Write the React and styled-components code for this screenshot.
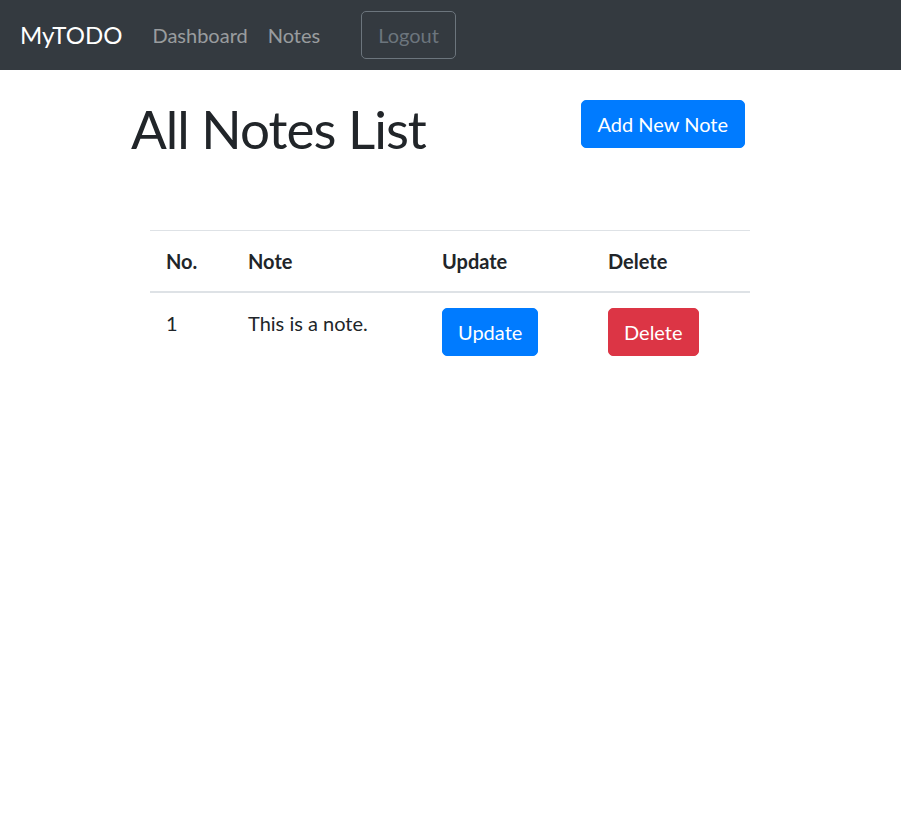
import React from "react";
import styled, { createGlobalStyle, css } from "styled-components";

const Global = createGlobalStyle`
  html, body { margin: 0; padding: 0; background: #fff; }
  body {
    font-family: Lato, "Open Sans", "Liberation Sans", sans-serif;
    color: #212529;
    font-size: 20px;
    line-height: 1.5;
  }
  * { box-sizing: border-box; }
`;

const Navbar = styled.nav`
  height: 70px;
  background: #343a40;
  display: flex;
  align-items: center;
  padding: 0 16px 0 20px;
`;

const Brand = styled.a`
  color: #fff;
  font-size: 24px;
  line-height: 1.5;
  text-decoration: none;
  margin-right: 20px;
`;

const NavLink = styled.a`
  color: rgba(255, 255, 255, 0.5);
  font-size: 20px;
  padding: 0 10px;
  text-decoration: none;
`;

const NavForm = styled.div`
  margin-left: 31px;
  display: flex;
`;

const Button = styled.button`
  font-family: inherit;
  font-size: 20px;
  line-height: 1.5;
  height: 48px;
  padding: 8px 16px;
  border-radius: 5px;
  border: 1px solid transparent;
  cursor: pointer;
  ${({ $variant }) =>
    $variant === "primary"
      ? css`background: #007bff; border-color: #007bff; color: #fff;`
      : $variant === "danger"
      ? css`background: #dc3545; border-color: #dc3545; color: #fff;`
      : css`background: transparent; border-color: #6c757d; color: #6c757d;`}
`;

const Main = styled.main`
  width: 600px;
  margin: 0 0 0 150px;
  padding-top: 30px;
`;

const Header = styled.div`
  display: flex;
  justify-content: space-between;
  align-items: flex-start;
  height: 60px;
  margin: 0 5px 70px -19px;
`;

const Title = styled.h1`
  margin: 0;
  font-size: 53px;
  letter-spacing: -1px;
  font-weight: 400;
  line-height: 58px;
`;

const Table = styled.table`
  width: 600px;
  border-collapse: collapse;
  border-top: 1px solid #dee2e6;
`;

const Th = styled.th`
  text-align: left;
  font-weight: 700;
  padding: 15px 16px;
  line-height: 30px;
  border-bottom: 2px solid #dee2e6;
  width: ${({ $w }) => $w}px;
`;

const Td = styled.td`
  padding: 15px 16px;
  line-height: 30px;
  vertical-align: top;
`;

const RowButton = styled(Button)`
  padding: 8px 15px;
`;

export default function App() {
  return (
    <>
      <Global />
      <Navbar>
        <Brand href="#">MyTODO</Brand>
        <NavLink href="#">Dashboard</NavLink>
        <NavLink href="#">Notes</NavLink>
        <NavForm>
          <Button>Logout</Button>
        </NavForm>
      </Navbar>
      <Main>
        <Header>
          <Title>All Notes List</Title>
          <Button $variant="primary">Add New Note</Button>
        </Header>
        <Table>
          <thead>
            <tr>
              <Th $w={82}>No.</Th>
              <Th $w={194}>Note</Th>
              <Th $w={166}>Update</Th>
              <Th $w={158}>Delete</Th>
            </tr>
          </thead>
          <tbody>
            <tr>
              <Td>1</Td>
              <Td>This is a note.</Td>
              <Td>
                <RowButton $variant="primary">Update</RowButton>
              </Td>
              <Td>
                <RowButton $variant="danger">Delete</RowButton>
              </Td>
            </tr>
          </tbody>
        </Table>
      </Main>
    </>
  );
}
